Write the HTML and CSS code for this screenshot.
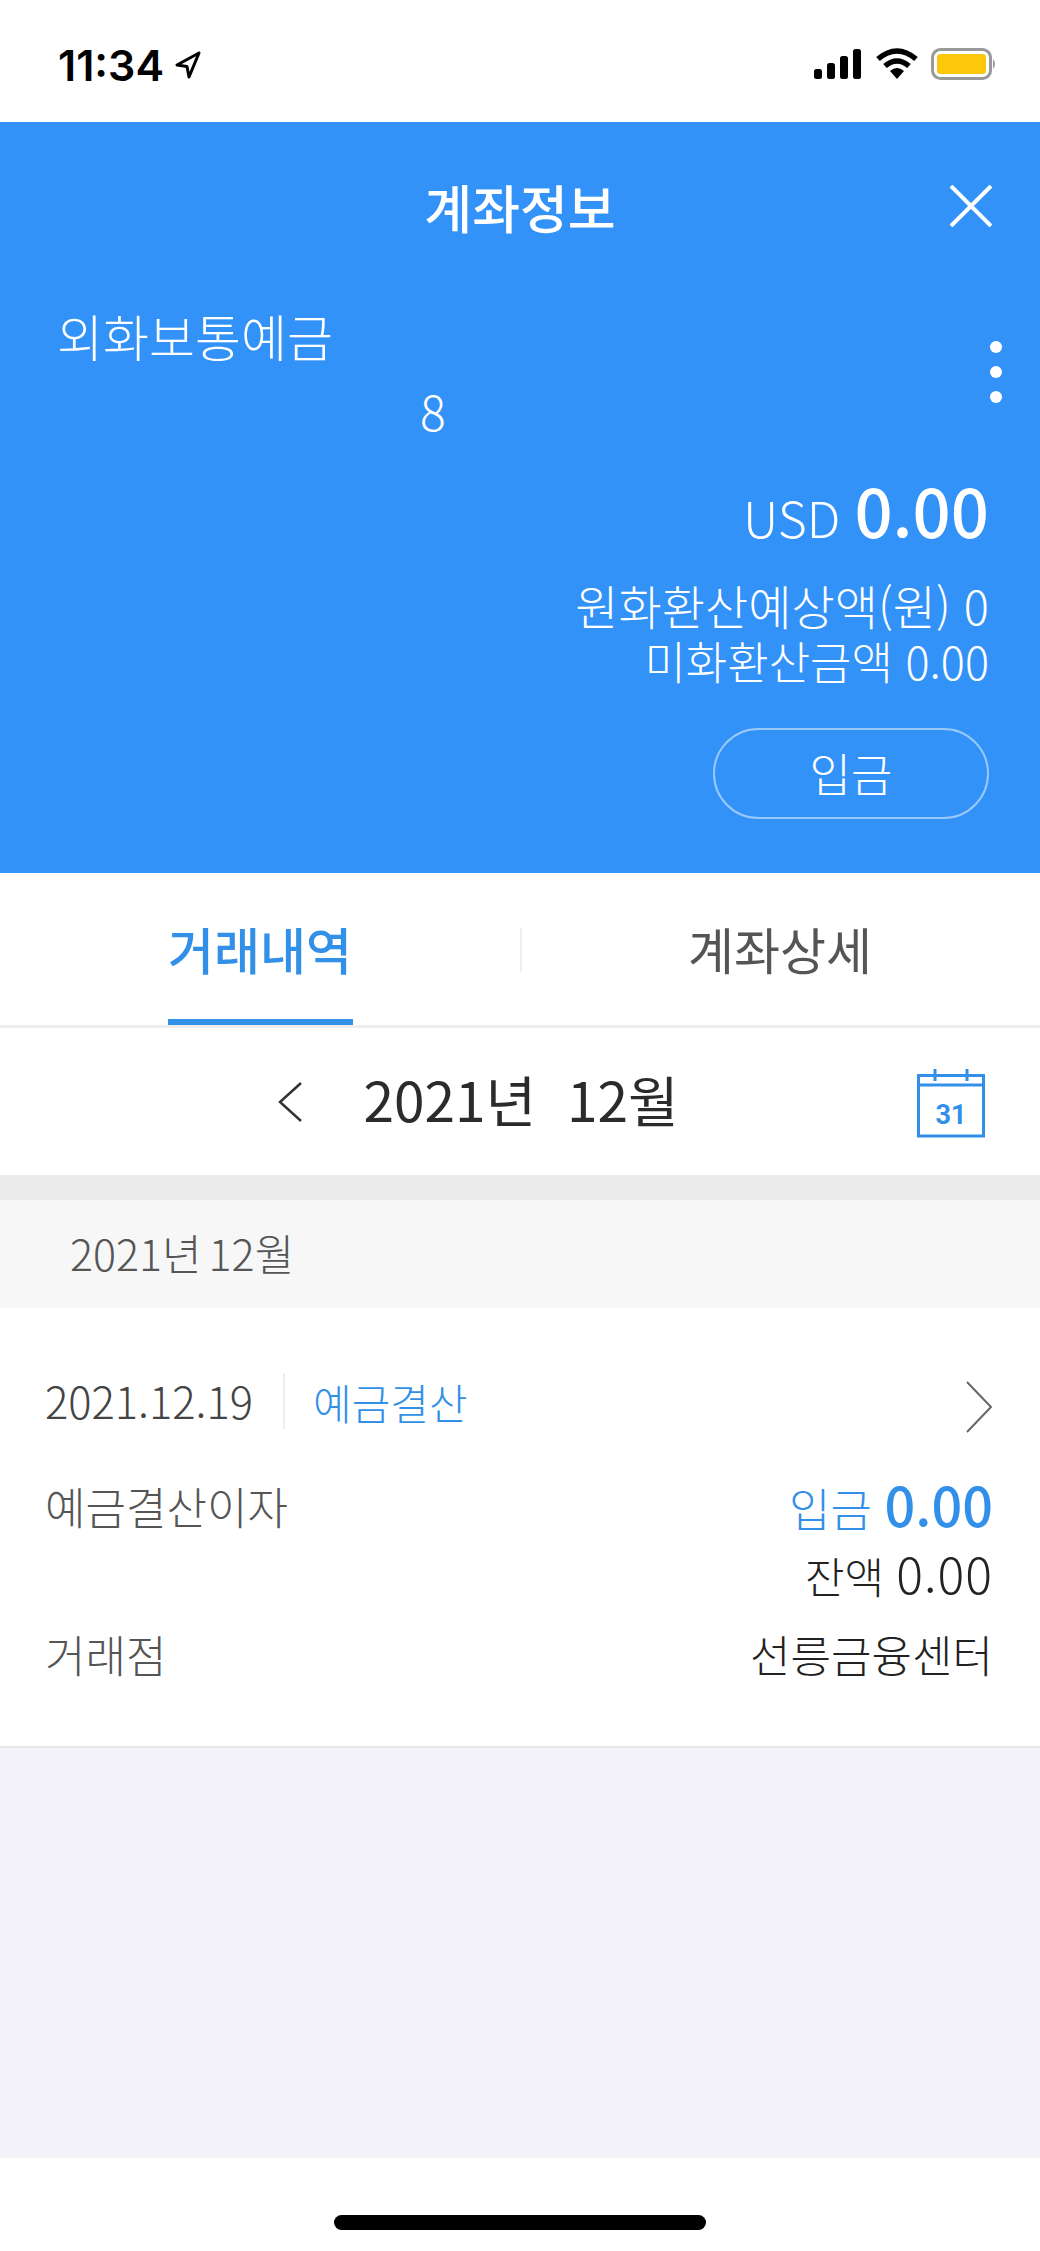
FILE: index.html
```html
<!DOCTYPE html>
<html lang="ko">
<head>
    <meta charset="UTF-8">
    <meta name="viewport" content="width=device-width, initial-scale=1.0">
    <title>계좌정보</title>
    <link rel="stylesheet" href="styles.css">
</head>
<body>
    <div class="status">
        <div class="status-left">
            <span class="time">11:34</span>
            <svg class="arrow" width="28" height="30" viewBox="0 0 28 30"><path d="M25 3 L3 15 L13 16.500 L15 27 Z" fill="none" stroke="#000" stroke-width="3" stroke-linejoin="round"/></svg>
        </div>
        <div class="status-right">
            <svg width="50" height="32" viewBox="0 0 50 32"><rect x="1" y="21" width="8" height="10" rx="2.500"/><rect x="14" y="15" width="8" height="16" rx="2.500"/><rect x="27" y="8" width="8" height="23" rx="2.500"/><rect x="40" y="1" width="8" height="30" rx="2.500"/></svg>
            <svg width="44" height="32" viewBox="0 0 44 32"><path d="M3 11 Q22 -5 41 11" fill="none" stroke="#000" stroke-width="5.500"/><path d="M10 18 Q22 8 34 18" fill="none" stroke="#000" stroke-width="5.500"/><path d="M15 23 Q22 17 29 23 L22 31 Z"/></svg>
            <svg width="66" height="32" viewBox="0 0 66 32"><rect x="1.500" y="1.500" width="58" height="29" rx="8" fill="#fff" stroke="#999" stroke-width="3"/><rect x="6" y="6" width="49" height="20" rx="3" fill="#fdc70c"/><path d="M62 11 Q66 16 62 21 Z" fill="#999"/></svg>
        </div>
    </div>

    <div class="account">
        <div class="title-row">
            <h1>계좌정보</h1>
            <svg class="close" width="44" height="42" viewBox="0 0 44 42"><path d="M2 1 L42 41 M42 1 L2 41" stroke="#fff" stroke-width="4" fill="none"/></svg>
        </div>
        <div class="account-name">외화보통예금</div>
        <div class="account-no">8</div>
        <div class="more"><i></i><i></i><i></i></div>
        <div class="balance"><span class="cur">USD</span> <b>0.00</b></div>
        <div class="sub">원화환산예상액(원) 0</div>
        <div class="sub sub-usd">미화환산금액 0.00</div>
        <div class="btn-row"><div class="btn">입금</div></div>
    </div>

    <div class="tabs">
        <div class="tab active"><span>거래내역</span></div>
        <div class="tab"><span>계좌상세</span></div>
    </div>

    <div class="month">
        <svg class="prev" width="26" height="42" viewBox="0 0 26 42"><path d="M24 2 L3 21 L24 40" fill="none" stroke="#333" stroke-width="2.500"/></svg>
        <div class="month-text">2021년&nbsp; 12월</div>
        <svg class="cal" width="68" height="70" viewBox="0 0 68 70">
            <path d="M1.500 7.500 H66.500 V68 H1.500 Z M1.500 17 H66.500" fill="none" stroke="#3390e8" stroke-width="3"/>
            <path d="M18 1 V13 M50 1 V13" stroke="#3390e8" stroke-width="3"/>
            <text x="34" y="56" text-anchor="middle" class="cal-num">31</text>
        </svg>
    </div>

    <div class="band"></div>
    <div class="section">2021년 12월</div>

    <div class="item">
        <div class="item-head">
            <span class="date">2021.12.19</span>
            <span class="kind">예금결산</span>
            <svg class="next" width="28" height="52" viewBox="0 0 28 52"><path d="M2 1 L26 26 L2 51" fill="none" stroke="#666" stroke-width="2"/></svg>
        </div>
        <div class="item-row">
            <span class="label">예금결산이자</span>
            <span class="amount"><span class="in">입금</span> <b>0.00</b></span>
        </div>
        <div class="rest">잔액 <span class="rest-num">0.00</span></div>
        <div class="item-row branch">
            <span class="label">거래점</span>
            <span class="value">선릉금융센터</span>
        </div>
    </div>

    <div class="empty"></div>
    <div class="home"><div class="home-bar"></div></div>
</body>
</html>
```

FILE: styles.css
```css
* {
    box-sizing: border-box;
}
body {
    margin: 0;
    width: 1040px;
    height: 2251px;
    overflow: hidden;
    background-color: #fff;
    font-family: "Noto Sans CJK KR", "Noto Sans", sans-serif;
    font-weight: 300;
    display: flex;
    flex-direction: column;
}
.status {
    height: 122px;
    padding: 44px 43px 0 58px;
    display: flex;
    justify-content: space-between;
    align-items: flex-start;
}
.status-left {
    display: flex;
    align-items: center;
    gap: 10px;
}
.time {
    font-family: Inter, "Liberation Sans", sans-serif;
    font-weight: 600;
    font-size: 43px;
    line-height: 42px;
    color: #000;
}
.status-right {
    display: flex;
    gap: 12px;
    padding-top: 4px;
}
.account {
    position: relative;
    height: 751px;
    background-color: #3292f8;
    color: #fff;
    padding: 0 51px 0 57px;
}
.title-row {
    height: 170px;
    display: flex;
    justify-content: center;
    align-items: center;
    position: relative;
}
h1 {
    margin: 0 6px 0 0;
    font-size: 52px;
    font-weight: 500;
    line-height: 60px;
}
.close {
    position: absolute;
    right: -4px;
    top: 63px;
}
.account-name {
    margin-top: 13px;
    font-size: 50px;
    line-height: 60px;
}
.account-no {
    margin-top: 14px;
    padding-left: 363px;
    font-size: 48px;
    line-height: 62px;
}
.more {
    position: absolute;
    right: 38px;
    top: 219px;
    display: flex;
    flex-direction: column;
    gap: 13px;
}
.more i {
    display: block;
    width: 12px;
    height: 12px;
    border-radius: 50%;
    background-color: #fff;
}
.balance {
    margin-top: 28px;
    text-align: right;
    line-height: 80px;
    font-size: 50px;
}
.balance b {
    font-size: 67px;
    font-weight: 500;
}
.sub {
    text-align: right;
    font-size: 47px;
    line-height: 56px;
}
.balance + .sub {
    margin-top: 21px;
}
.sub-usd {
    font-size: 45px;
}
.btn-row {
    margin-top: 39px;
    display: flex;
    justify-content: flex-end;
}
.btn {
    width: 276px;
    height: 91px;
    border: 2px solid #9ac8fb;
    border-radius: 46px;
    font-size: 45px;
    line-height: 85px;
    text-align: center;
}
.tabs {
    height: 155px;
    display: flex;
    border-bottom: 3px solid #eee;
}
.tab {
    flex: 1;
    display: flex;
    justify-content: center;
    font-size: 50px;
    font-weight: 400;
    color: #555;
}
.tab + .tab {
    position: relative;
}
.tab + .tab::before {
    content: "";
    position: absolute;
    left: 0;
    top: 55px;
    width: 2px;
    height: 44px;
    background-color: #eee;
}
.tab span {
    height: 152px;
    width: 185px;
    text-align: center;
    line-height: 150px;
    white-space: nowrap;
}
.tab.active span {
    color: #3390e8;
    font-weight: 500;
    border-bottom: 6px solid #3390e8;
}
.month {
    height: 147px;
    position: relative;
    display: flex;
    justify-content: center;
    align-items: center;
    gap: 60px;
    padding-right: 84px;
}
.month-text {
    font-size: 55px;
    font-weight: 400;
    color: #2b2b2b;
    line-height: 70px;
    margin-bottom: 8px;
}
.prev {
    display: block;
}
.cal {
    position: absolute;
    right: 55px;
    top: 40px;
}
.cal-num {
    font-family: Roboto, "Liberation Sans", sans-serif;
    font-weight: 700;
    font-size: 27px;
    fill: #3390e8;
}
.band {
    height: 25px;
    background-color: #ebebeb;
}
.section {
    height: 108px;
    background-color: #f7f7f7;
    padding-left: 70px;
    font-size: 43px;
    color: #555;
    line-height: 104px;
    word-spacing: -5px;
}
.item {
    height: 440px;
    padding: 62px 47px 0 45px;
    border-bottom: 2px solid #e6e6e6;
    font-weight: 400;
}
.item-head {
    height: 62px;
    display: flex;
    align-items: center;
}
.date {
    font-size: 43.500px;
    font-weight: 300;
    color: #444;
    padding-right: 30px;
    border-right: 2px solid #eee;
    line-height: 56px;
}
.kind {
    font-size: 42px;
    font-weight: 300;
    color: #3390e8;
    margin-left: 28px;
    flex: 1;
}
.next {
    margin-top: 12px;
}
.item-row {
    display: flex;
    justify-content: space-between;
    align-items: center;
    line-height: 62px;
}
.item-head + .item-row {
    margin-top: 41px;
}
.label {
    font-size: 44px;
    font-weight: 300;
    color: #555;
}
.amount {
    font-size: 45px;
    color: #3390e8;
    font-weight: 300;
}
.amount b {
    font-size: 54px;
    font-weight: 500;
}
.rest {
    text-align: right;
    font-size: 43px;
    font-weight: 300;
    color: #222;
    line-height: 62px;
    margin-top: 2px;
}
.rest-num {
    font-size: 50px;
    letter-spacing: 1px;
}
.branch {
    margin-top: 17px;
}
.value {
    font-size: 44px;
    font-weight: 300;
    color: #222;
}
.empty {
    height: 410px;
    background-color: #f2f2f8;
}
.home {
    flex: 1;
    display: flex;
    justify-content: center;
    padding-top: 57px;
}
.home-bar {
    width: 372px;
    height: 15px;
    border-radius: 8px;
    background-color: #000;
}
```
